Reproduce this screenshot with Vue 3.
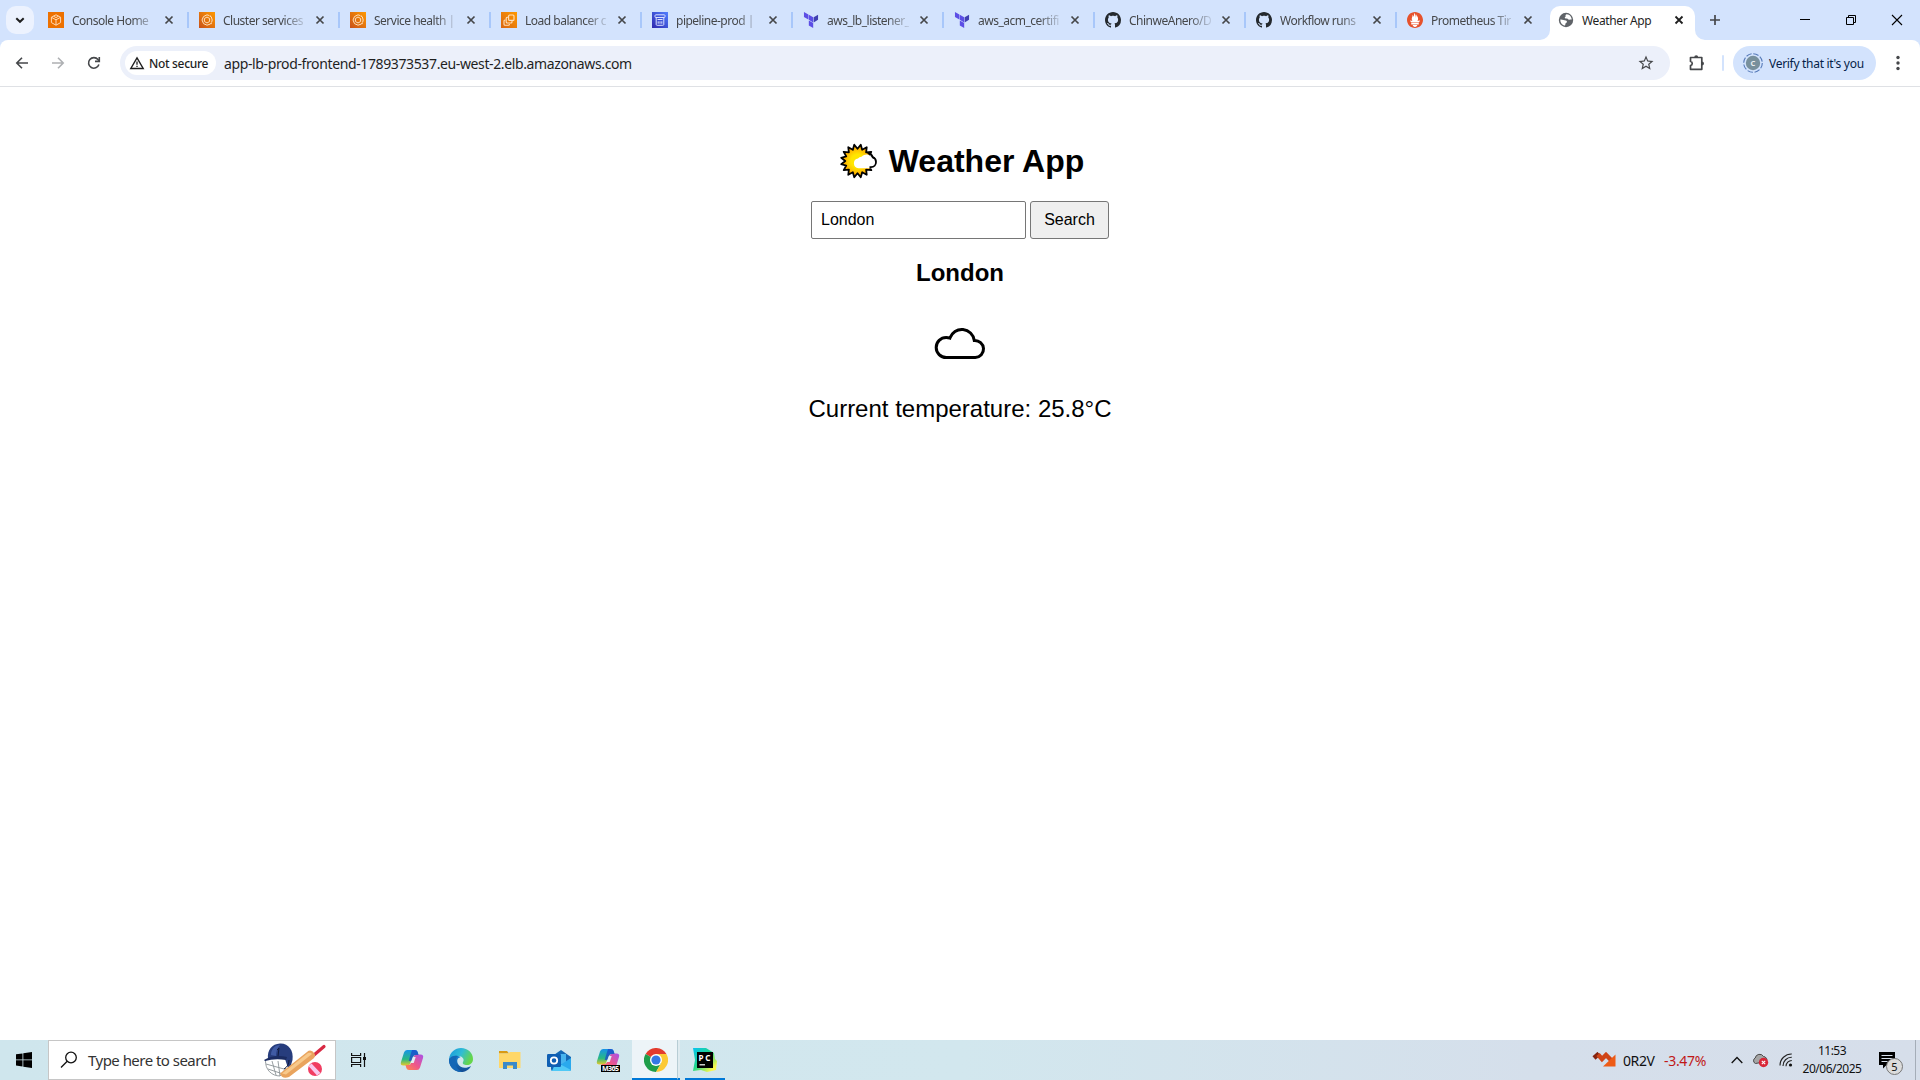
<script setup>
const tabs = [
  { title: 'Console Home', icon: 'cube' },
  { title: 'Cluster services', icon: 'ecs' },
  { title: 'Service health |', icon: 'ecs' },
  { title: 'Load balancer c', icon: 'ec2' },
  { title: 'pipeline-prod |', icon: 's3' },
  { title: 'aws_lb_listener_', icon: 'terraform' },
  { title: 'aws_acm_certifi', icon: 'terraform' },
  { title: 'ChinweAnero/D', icon: 'github' },
  { title: 'Workflow runs', icon: 'github' },
  { title: 'Prometheus Tir', icon: 'prometheus' },
]

// Star outline of the sun: alternating outer and inner points
const spikes = 16
const sunPoints = Array.from({ length: spikes * 2 }, (_, k) => {
  const r = k % 2 ? 16.6 : 12.2
  const a = (k * Math.PI) / spikes
  return `${(17.5 + r * Math.cos(a)).toFixed(2)},${(18 + r * Math.sin(a)).toFixed(2)}`
}).join(' ')
</script>

<template>
  <div class="screen">
    <header class="tabstrip">
      <button class="tab-search"><svg width="28" height="28" viewBox="0 0 28 28"><path d="M10.3 12.2l3.7 3.6 3.7-3.6" fill="none" stroke="#1f1f1f" stroke-width="2" /></svg></button>
      <div v-for="(t, i) in tabs" :key="i" class="tab" :class="{ last: i === tabs.length - 1 }">
        <svg v-if="t.icon === 'cube'" class="fav" viewBox="0 0 16 16">
          <rect width="16" height="16" fill="#ed7100" />
          <path d="M8 2.8l4.6 2.5v5.3L8 13.2l-4.6-2.6V5.3zM3.4 5.3L8 7.8l4.6-2.5M8 7.8v5.4M5.6 4.2L8 5.6l2.4-1.4" fill="none" stroke="#ffd9b5" stroke-width="1" stroke-linejoin="round" />
        </svg>
        <svg v-else-if="t.icon === 'ecs'" class="fav" viewBox="0 0 16 16">
          <defs><linearGradient :id="'ecs' + i" x1="0" y1="1" x2="1" y2="0"><stop offset="0" stop-color="#c8511b" /><stop offset="1" stop-color="#ff9900" /></linearGradient></defs>
          <rect width="16" height="16" :fill="'url(#ecs' + i + ')'" />
          <path d="M10.4 3.6L8 2.8 4.5 4.6 3 8l1.5 3.6L8 13.2l3.4-1.2M12.6 10.6L13.2 8l-.9-3.2" fill="none" stroke="#ffe0bd" stroke-width="1" />
          <path d="M8 5l2.6 1.5v3L8 11 5.4 9.500v-3z" fill="none" stroke="#ffe0bd" stroke-width="1" />
          <circle cx="11.500" cy="4.200" r=".8" fill="#ffe0bd" /><circle cx="12" cy="11.500" r=".8" fill="#ffe0bd" />
        </svg>
        <svg v-else-if="t.icon === 'ec2'" class="fav" viewBox="0 0 16 16">
          <defs><linearGradient id="ec2" x1="0" y1="1" x2="1" y2="0"><stop offset="0" stop-color="#d86613" /><stop offset="1" stop-color="#ff9900" /></linearGradient></defs>
          <rect width="16" height="16" fill="url(#ec2)" />
          <g fill="none" stroke="#ffe0bd" stroke-width="1.100"><rect x="7.600" y="3" width="5.400" height="5.400" rx="1" /><path d="M7 5.300H6.200a1 1 0 00-1 1V10a1 1 0 001 1H10a1 1 0 001-1V9" /><path d="M4.500 8H4a1 1 0 00-1 1v3.200a1 1 0 001 1h3.400a1 1 0 001-1V12" /></g>
        </svg>
        <svg v-else-if="t.icon === 's3'" class="fav" viewBox="0 0 16 16">
          <defs><linearGradient id="s3" x1="0" y1="1" x2="1" y2="0"><stop offset="0" stop-color="#2e27ad" /><stop offset="1" stop-color="#527fff" /></linearGradient></defs>
          <rect width="16" height="16" fill="url(#s3)" />
          <g fill="none" stroke="#dbe0ff" stroke-width="1"><rect x="3" y="2.800" width="10" height="2.700" rx=".8" /><path d="M4.200 5.500v7q0 .8 1 .8h5.600q1 0 1-.8v-7M5.500 7.500h5" /><path d="M6.200 9.300v2.400M8 9.300v2.400M9.800 9.300v2.400" /></g>
        </svg>
        <svg v-else-if="t.icon === 'terraform'" class="fav" viewBox="0 0 24 24">
          <path fill="#5c4ee5" d="M1.440 0v7.575l6.561 3.790V3.787zM8.720 4.230v7.575l6.561 3.787V8.018zm0 8.405v7.575L15.280 24v-7.578z" /><path fill="#4040b2" d="M22.560 4.227l-6.561 3.791v7.574l6.560-3.787z" />
        </svg>
        <svg v-else-if="t.icon === 'github'" class="fav" viewBox="0 0 16 16">
          <path fill="#24292e" d="M8 0C3.580 0 0 3.580 0 8c0 3.540 2.290 6.530 5.470 7.590.4.070.55-.17.55-.38 0-.19-.01-.82-.01-1.490-2.010.37-2.530-.49-2.690-.94-.09-.23-.48-.94-.82-1.130-.28-.15-.68-.52-.01-.53.63-.01 1.080.58 1.230.82.72 1.210 1.870.87 2.330.66.07-.52.28-.87.51-1.070-1.780-.2-3.640-.89-3.640-3.950 0-.87.31-1.590.82-2.150-.08-.2-.36-1.020.08-2.120 0 0 .67-.21 2.200.82.64-.18 1.320-.27 2-.27s1.360.09 2 .27c1.530-1.040 2.200-.82 2.200-.82.44 1.100.16 1.920.08 2.120.51.56.82 1.270.82 2.150 0 3.070-1.870 3.750-3.650 3.950.29.25.54.73.54 1.480 0 1.070-.01 1.930-.01 2.200 0 .21.15.46.55.38A8.013 8.013 0 0016 8c0-4.420-3.580-8-8-8z" />
        </svg>
        <svg v-else class="fav" viewBox="0 0 24 24">
          <circle cx="12" cy="12" r="11" fill="#fff" />
          <path fill="#e6522c" d="M12 0C5.373 0 0 5.372 0 12c0 6.627 5.373 12 12 12s12-5.373 12-12c0-6.628-5.373-12-12-12zm0 22.460c-1.885 0-3.414-1.260-3.414-2.814h6.828c0 1.553-1.528 2.813-3.414 2.813zm5.640-3.745H6.360v-2.046h11.280v2.046zm-.04-3.098H6.391c-.037-.043-.075-.086-.111-.13-1.155-1.401-1.427-2.133-1.690-2.879-.005-.025 1.400.287 2.395.511 0 0 .513.119 1.262.255-.72-.843-1.147-1.915-1.147-3.010 0-2.406 1.845-4.508 1.180-6.207.648.053 1.340 1.367 1.387 3.422.689-.951.977-2.690.977-3.755 0-1.103.727-2.385 1.454-2.429-.648 1.069.168 1.984.894 4.256.272.854.237 2.290.447 3.201.07-1.892.395-4.652 1.595-5.605-.529 1.200.079 2.702.494 3.424.671 1.164 1.078 2.047 1.078 3.716a4.642 4.642 0 01-1.110 2.996c.792-.149 1.340-.283 1.340-.283l2.573-.502s-.374 1.538-1.810 3.019z" />
        </svg>
        <span class="title">{{ t.title }}</span>
        <svg class="close" viewBox="0 0 16 16"><path d="M4.500 4.500l7 7M11.500 4.500l-7 7" stroke="#45474a" stroke-width="1.700" /></svg>
      </div>
      <div class="tab active">
        <svg class="foot left" width="10" height="10"><path d="M10 0v10H0A10 10 0 0010 0z" fill="#fff" /></svg>
        <svg class="fav" viewBox="0 0 16 16"><circle cx="8" cy="8" r="7.200" fill="#5f6368" /><path d="M2.300 7.600c2.500-.2 3.500.8 5.500.9.900.1 1.200.8 1.100 1.500-.1 1-1.500 1-1.500 1.900 0 .8-.4 1.900-1.300 1.700C3.600 12.700 2.200 10.500 2.300 7.600zM8.800 2.300c-1.100.3-1.500 1.100-1.200 1.900.2.700-1 .7-.8 1.500.2.900 1.400.6 2.200.8 1 .2 1 1.300 2.100 1.300.9 0 1.500-.2 2.600-.2C13.600 5 11.800 2.500 8.800 2.300z" fill="#fff" /></svg>
        <span class="title">Weather App</span>
        <svg class="close" viewBox="0 0 16 16"><path d="M4.500 4.500l7 7M11.500 4.500l-7 7" stroke="#1f1f1f" stroke-width="1.800" /></svg>
        <svg class="foot right" width="10" height="10"><path d="M0 0v10h10A10 10 0 010 0z" fill="#fff" /></svg>
      </div>
      <svg class="plus" width="28" height="28" viewBox="0 0 28 28"><path d="M14 9v10M9 14h10" stroke="#45474a" stroke-width="1.700" /></svg>
      <div class="window-controls">
        <svg width="46" height="40"><path d="M18 19.500h10" stroke="#000" /></svg>
        <svg width="46" height="40"><path d="M18.500 17.500h7v7h-7zM20.500 17v-1.500h7v7H26" fill="none" stroke="#000" /></svg>
        <svg width="46" height="40"><path d="M18 15l10 10M28 15L18 25" stroke="#000" stroke-width="1.100" /></svg>
      </div>
    </header>

    <div class="toolbar-wrap">
      <div class="toolbar">
        <svg class="nav" viewBox="0 0 16 16"><path d="M14 8H3M8 2.800L2.800 8 8 13.200" fill="none" stroke="#45474a" stroke-width="1.600" /></svg>
        <svg class="nav" viewBox="0 0 16 16"><path d="M2 8h11M8 2.800L13.200 8 8 13.200" fill="none" stroke="#aeb0b3" stroke-width="1.600" /></svg>
        <svg class="nav" viewBox="0 0 16 16"><path d="M12.900 9.600A5.300 5.300 0 1112 4.600l1.300 1.500" fill="none" stroke="#45474a" stroke-width="1.600" /><path d="M13.300 2v4.400H9" fill="none" stroke="#45474a" stroke-width="1.600" /></svg>
        <div class="omnibox">
          <div class="chip">
            <svg width="16" height="14" viewBox="0 0 16 14"><path d="M8 1.800l6.200 10.700H1.800z" fill="none" stroke="#1f1f1f" stroke-width="1.400" /><path d="M8 5.500v3.300M8 9.800v1.300" stroke="#1f1f1f" stroke-width="1.300" /></svg>
            <span class="chip-text">Not secure</span>
          </div>
          <span class="url">app-lb-prod-frontend-1789373537.eu-west-2.elb.amazonaws.com</span>
          <svg class="star" width="18" height="18" viewBox="0 0 24 24"><path fill="#45474a" d="M22 9.240l-7.190-.62L12 2 9.190 8.630 2 9.240l5.460 4.730L5.820 21 12 17.270 18.180 21l-1.630-7.030L22 9.240zM12 15.400l-3.760 2.270 1-4.280-3.320-2.880 4.380-.38L12 6.100l1.710 4.040 4.380.38-3.320 2.880 1 4.280L12 15.400z" /></svg>
        </div>
        <svg class="ext" width="20" height="20" viewBox="0 0 20 20"><path d="M3.500 4.500h11.300v11.800H3.500v-3.800c2.300-.3 2.300-3.700 0-4z" fill="none" stroke="#45474a" stroke-width="1.700" stroke-linejoin="round" /><path d="M7.200 4.500a2 2.200 0 014 0zM14.800 8.400a2.200 2 0 010 4z" fill="#45474a" /></svg>
        <i class="divider"></i>
        <div class="verify">
          <svg width="20" height="20" viewBox="0 0 20 20"><circle cx="10" cy="10" r="9.300" fill="none" stroke="#5579b8" stroke-width="1.100" stroke-dasharray="5.600 1.700" /><circle cx="10" cy="10" r="7.200" fill="#78909c" /><text x="10" y="12.700" text-anchor="middle" font-size="7.500" font-weight="700" fill="#e8eef0">C</text></svg>
          <span class="verify-text">Verify that it's you</span>
        </div>
        <svg class="more" width="6" height="18" viewBox="0 0 6 18"><g fill="#45474a"><circle cx="3" cy="3.500" r="1.700" /><circle cx="3" cy="9" r="1.700" /><circle cx="3" cy="14.500" r="1.700" /></g></svg>
      </div>
    </div>

    <main class="page">
      <h1>
        <svg width="37" height="36" viewBox="0 0 37 36">
          <defs><radialGradient id="sun"><stop offset=".4" stop-color="#ffe600" /><stop offset=".9" stop-color="#ffa500" /></radialGradient></defs>
          <polygon :points="sunPoints" fill="url(#sun)" stroke="#000" stroke-width="1.800" stroke-linejoin="round" />
          <path d="M18.500 25.300a5 5 0 01-.5-9.900 4.500 4.500 0 013.500-1.600 6.500 6.500 0 0110.800 1.400 5 5 0 01-.8 10.100z" fill="#fff" />
          <path d="M27.500 10c2.700.4 4.500 1.800 5.300 4.200 1.900.8 3.200 2.600 3.200 4.800 0 2.900-2 5.200-5 5.200h-1.500" fill="none" stroke="#000" stroke-width="1.800" />
        </svg>
        <span>Weather App</span>
      </h1>
      <div class="search-row">
        <input value="London" />
        <button>Search</button>
      </div>
      <h2>London</h2>
      <svg class="cloud" width="52" height="32" viewBox="0 0 52 32"><path d="M12.200 30.500a10 10 0 010-20q1.900 0 3.700.6A12.600 12.800 0 0140.300 13.500 8.700 8.500 0 0141.300 30.500z" fill="#fff" stroke="#000" stroke-width="3" /></svg>
      <p class="temp">Current temperature: 25.8°C</p>
    </main>

    <footer class="taskbar">
      <div class="start"><svg width="16" height="16" viewBox="0 0 16 16"><path d="M0 2.300l6.500-.9v6.100H0zM7.300 1.300L16 0v7.500H7.300zM0 8.300h6.500v6.200L0 13.600zM7.300 8.300H16V16l-8.700-1.300z" /></svg></div>
      <div class="search">
        <svg class="lens" width="18" height="18" viewBox="0 0 18 18"><circle cx="11" cy="6.500" r="5.300" fill="none" stroke="#111" stroke-width="1.300" /><path d="M7.200 10.300L1 16.500" stroke="#111" stroke-width="1.300" /></svg>
        <span class="hint">Type here to search</span>
        <svg class="cricket" width="64" height="37" viewBox="0 0 64 37">
          <g fill="none" stroke="#8d9497" stroke-width=".9"><path d="M2.500 18C2 28 9 34 17 34l6-8M3 22l18 5M5 27l15 5M9 19l4 14M15 19l2 15" /></g>
          <path d="M5 17C4 8 9 2 17 1.500 25 1 31 8 29.500 18l-2.500 8-2 0-3-9H8z" fill="#273d7d" /><path d="M8 13C8 7 12 3 17 3c-3 3-4 7-4 11z" fill="#405ba4" /><path d="M1 18q10-6 23-3l-1 3q-11-2-21 1z" fill="#1b2c62" /><path d="M14 8l2-2-1 8M26 18q0 6-5 9" stroke="#101a3d" fill="none" />
          <path d="M51 13l10-8.500" stroke="#d82943" stroke-width="3.200" stroke-linecap="round" /><path d="M17 31.500L44 10q4-3.500 7.500 1.500 1.500 2.500-1 5L26 35q-7 2.500-9-3.500z" fill="#e9a45e" /><path d="M19 31.500L45 11q2.500-1 4 1L23 32.500z" fill="#f8c98b" />
          <circle cx="52" cy="27" r="7" fill="#f13d62" /><path d="M45.500 24l8.500 9.500 3.500-2.500-9-9.500z" fill="#f9c8ee" />
        </svg>
      </div>
      <div class="task view"><svg width="18" height="18" viewBox="0 0 18 18"><g fill="none" stroke="#111" stroke-width="1.200"><path d="M1.600 2v2.500h9V2M1.600 16v-2.500h9V16M1.600 6.500h9v5h-9zM14.500 2v14" /></g><path d="M13 6h3v3h-3z" fill="#111" /></svg></div>
      <div class="task">
        <svg width="24" height="22" viewBox="0 0 24 22">
          <defs>
            <linearGradient id="cpa" x1="0" y1="0" x2="0" y2="1"><stop offset="0" stop-color="#1693e9" /><stop offset=".6" stop-color="#29b981" /><stop offset="1" stop-color="#e7c92b" /></linearGradient>
            <linearGradient id="cpb" x1="1" y1="0" x2="0" y2="1"><stop offset="0" stop-color="#a951e9" /><stop offset=".55" stop-color="#ef5789" /><stop offset="1" stop-color="#ff8a4c" /></linearGradient>
          </defs>
          <path d="M7 1h8q2 0 2.700 2l.8 3h-3q-2 0-2.600 2L10.500 14q-.8 2.500-3.500 2.500H3.500Q0 16.500 1 13L4 3.500Q4.800 1 7 1z" fill="url(#cpa)" />
          <path d="M17 21H9q-2 0-2.700-2l-.8-3h3q2 0 2.600-2L13.500 8q.8-2.500 3.500-2.500h3.500Q24 5.500 23 9l-3 9.500Q19.200 21 17 21z" fill="url(#cpb)" />
          <path d="M12 1h3q2 0 2.700 2l.8 3h-3q-2 0-2.600 2l-1.200 4h-3l1.700-6z" fill="#1b48c9" fill-opacity=".75" />
          <path d="M12.900 8l-2.400 6h3.200l2-6z" fill="#e4f0f4" />
        </svg>
      </div>
      <div class="task">
        <svg width="24" height="24" viewBox="0 0 24 24">
          <defs>
            <linearGradient id="eda" x1="0" y1="0" x2="1" y2=".4"><stop offset="0" stop-color="#1796dd" /><stop offset=".55" stop-color="#30bcd5" /><stop offset="1" stop-color="#65d64b" /></linearGradient>
            <linearGradient id="edb" x1="0" y1="0" x2="0" y2="1"><stop offset="0" stop-color="#1682d5" /><stop offset="1" stop-color="#134b91" /></linearGradient>
          </defs>
          <path d="M0 11C1 4 6 0 12 0c7 0 12 5 12 11 0 4-3 6-6 6-3 0-5-1-4-3 2-3-1-6-5-6-4 0-7 1-9 3z" fill="url(#eda)" />
          <path d="M0 11c2-3 6-4 9-3 1 .3 2 .8 2.500 1.300C8 10 7.500 13 9 16c2 4 8 5 13 2-2 4-6 6-10 6C5 24-.5 18 0 11z" fill="url(#edb)" />
          <path d="M9 8c-4 3-4 12 4 15.900C5 24.500-.5 18 0 11c2-3 6-4 9-3z" fill="#1467b6" />
        </svg>
      </div>
      <div class="task">
        <svg width="22" height="20" viewBox="0 0 22 20"><path d="M0 1h8l2 2.500H0z" fill="#d99a13" /><path d="M0 3.500h9L11 2h10.500v16H0z" fill="#ffd769" /><path d="M4 19v-7h14v7h-4v-3.500H8V19z" fill="#3b8ac9" /></svg>
      </div>
      <div class="task">
        <svg width="24" height="23" viewBox="0 0 24 23"><path d="M4 8L14 1l10 7v12q0 2-2 2H6q-2 0-2-2z" fill="#1468b5" /><path d="M6 5h13v10H6z" fill="#48b4ee" /><path d="M4 22L24 9v11q0 2-2 2z" fill="#2aa9ed" /><path d="M9 13l15 8q-.5 1-2 1H5z" fill="#50c9f6" /><rect y="5" width="14" height="13" rx="1.200" fill="#0f5fb3" /><circle cx="7" cy="11.500" r="3.200" fill="none" stroke="#fff" stroke-width="1.800" /></svg>
      </div>
      <div class="task">
        <svg width="24" height="24" viewBox="0 0 24 24">
          <path d="M7 1h8q2 0 2.700 2l.8 3h-3q-2 0-2.600 2L10.500 14q-.8 2.500-3.500 2.500H3.500Q0 16.500 1 13L4 3.500Q4.800 1 7 1z" fill="url(#cpa)" />
          <path d="M17 21H9q-2 0-2.700-2l-.8-3h3q2 0 2.600-2L13.500 8q.8-2.500 3.500-2.500h3.500Q24 5.500 23 9l-3 9.500Q19.200 21 17 21z" fill="url(#cpb)" />
          <path d="M12 1h3q2 0 2.700 2l.8 3h-3q-2 0-2.600 2l-1.200 4h-3l1.700-6z" fill="#1b48c9" fill-opacity=".75" />
          <path d="M12.900 8l-2.400 6h3.200l2-6z" fill="#e4f0f4" />
          <rect x="5" y="17" width="19" height="7" fill="#000" /><text x="14.500" y="23" text-anchor="middle" font-size="7" font-weight="700" textLength="17" fill="#fff">M365</text>
        </svg>
      </div>
      <div class="task current">
        <svg width="24" height="24" viewBox="0 0 24 24"><path d="M12 12L1.600 6A12 12 0 0122.400 6z" fill="#e33b2e" /><path d="M12 12L1.600 6A12 12 0 0012 24l5.200-9z" fill="#1e9e4a" /><path d="M12 6h10.400A12 12 0 0112 24l5.200-9z" fill="#fcc934" /><circle cx="12" cy="12" r="6" fill="#fff" /><circle cx="12" cy="12" r="4.600" fill="#3478e5" /></svg>
      </div>
      <i class="stack"></i>
      <div class="task running">
        <svg width="24" height="24" viewBox="0 0 24 24"><defs><linearGradient id="pc" x1="0" y1="0" x2="1" y2="1"><stop offset="0" stop-color="#07c3f2" /><stop offset=".45" stop-color="#21d789" /><stop offset=".85" stop-color="#fcf84a" /></linearGradient></defs><path d="M0 0h13l8 5 1 6 2 2-1 9-9 2-6-2-8 1 2-11z" fill="url(#pc)" /><rect x="4" y="4" width="16" height="16" fill="#000" /><text x="5.500" y="12.500" font-size="8" font-weight="700" textLength="12" fill="#fff">PC</text><path d="M6.500 16.800h5.500" stroke="#fff" stroke-width="1.200" /></svg>
      </div>
      <div class="tray">
        <svg class="stock" width="24" height="16" viewBox="0 0 24 16"><path d="M2 6l5-4.500" stroke="#84230f" stroke-width="4.500" /><path d="M6 2.500l4 4.500 4-4 6 6" fill="none" stroke="#cf4417" stroke-width="4.500" /><path d="M23.500 2.500V14.500H11z" fill="#ee5b16" /></svg>
        <span class="ticker">0R2V</span>
        <span class="change">-3.47%</span>
        <svg class="chev" width="12" height="8" viewBox="0 0 12 8"><path d="M.700 7L6 1.500 11.300 7" fill="none" stroke="#111" stroke-width="1.300" /></svg>
        <svg class="onedrive" width="17" height="15" viewBox="0 0 17 15"><path d="M3.500 10.500a3 3 0 01-.3-5.500A4.500 4.500 0 0111.500 3.500a3.500 3.500 0 013 5z" fill="#a5a5a5" stroke="#484848" stroke-width="1" /><circle cx="11.500" cy="9.500" r="4.700" fill="#d92637" /><path d="M9.800 7.800l3.400 3.400M13.200 7.800l-3.400 3.400" stroke="#fff" stroke-width="1.100" /></svg>
        <svg class="wifi" width="14" height="14" viewBox="0 0 14 14"><g fill="none" stroke="#222" stroke-width="1.100"><path d="M1 12.500A11.500 11.500 0 0112.800 1" /><path d="M4 13A8.500 8.500 0 0112.800 4.300" /><path d="M7 13.200A5.800 5.800 0 0112.800 7.500" /></g><circle cx="11.500" cy="12" r="1.600" fill="#111" /></svg>
        <div class="clock"><span class="time">11:53</span><span class="date">20/06/2025</span></div>
        <div class="notes">
          <svg width="17" height="17" viewBox="0 0 17 17"><path d="M0 0h16v13H7.500L4 16.500V13H0z" fill="#000" /><path d="M2.500 3.500h11M2.500 6.500h11M2.500 9.500h6" stroke="#d6dfeb" stroke-width="1.100" /></svg>
          <b class="badge">5</b>
        </div>
        <i class="peek"></i>
      </div>
    </footer>
  </div>
</template>

<style>
body { margin: 0; overflow: hidden; }
</style>

<style scoped>
.screen { width: 1920px; height: 1080px; display: flex; flex-direction: column; background: #fff; font-family: "Noto Sans", "Open Sans", sans-serif; box-sizing: border-box; overflow: hidden; white-space: nowrap; }
.screen * { box-sizing: border-box; }
svg { display: block; flex: none; }
.tabstrip { height: 40px; flex: none; background: #d3e3fd; display: flex; }
.tab-search { width: 28px; height: 28px; margin: 6px 4px 0 6px; padding: 0; border: 0; border-radius: 10px; background: #ecf2fe; flex: none; }
.tab { width: 151px; height: 40px; flex: none; display: flex; align-items: center; padding-left: 10px; position: relative; background: linear-gradient(#a8c7fa, #a8c7fa) 149px 12px / 2px 16px no-repeat; }
.tab.last { background: none; }
.fav { width: 16px; height: 16px; }
.title { width: 82px; margin-left: 8px; font-size: 12px; line-height: 16px; letter-spacing: -.5px; color: #45474a; padding-top: 1px; -webkit-mask-image: linear-gradient(90deg, #000 60px, rgba(0, 0, 0, .15) 82px); mask-image: linear-gradient(90deg, #000 60px, rgba(0, 0, 0, .15) 82px); }
.close { width: 16px; height: 16px; margin-left: 7px; }
.tab.active { width: 145px; height: 34px; margin: 6px 0 0 2px; padding: 0 0 6px 8px; background: #fff; border-radius: 10px 10px 0 0; }
.active .title { color: #1f1f1f; letter-spacing: -.38px; -webkit-mask-image: none; mask-image: none; }
.foot { position: absolute; bottom: 0; }
.foot.left { left: -10px; }
.foot.right { right: -10px; }
.plus { margin: 6px 0 0 6px; }
.window-controls { display: flex; margin-left: auto; }
.toolbar-wrap { height: 47px; flex: none; background: #d3e3fd; }
.toolbar { height: 47px; background: #fff; border-bottom: 1px solid #dfe1e5; border-radius: 8px 8px 0 0; display: flex; align-items: center; padding-left: 14px; }
.nav { width: 16px; height: 16px; margin-right: 20px; }
.nav + .omnibox { margin-left: -2px; }
.omnibox { width: 1550px; height: 34px; border-radius: 17px; background: #ecf0fa; display: flex; align-items: center; padding: 0 15px 0 5px; }
.chip { width: 91px; height: 24px; border-radius: 12px; background: #fff; display: flex; align-items: center; padding-left: 4px; }
.chip-text { margin-left: 4px; font-size: 12px; font-weight: 500; letter-spacing: -.32px; color: #1f1f1f; }
.url { margin-left: 8px; font-size: 14px; letter-spacing: -.375px; color: #1f1f1f; }
.star { margin-left: auto; }
.ext { margin-left: 17px; }
.divider { width: 2px; height: 16px; margin-left: 15px; background: #d3e3fd; border-radius: 1px; }
.verify { width: 143px; height: 34px; margin-left: 9px; border-radius: 17px; background: #d3e3fd; display: flex; align-items: center; padding-left: 10px; }
.verify-text { margin-left: 6px; font-size: 12px; letter-spacing: -.3px; color: #041e49; }
.more { margin-left: 19px; }
.page { height: 953px; flex: none; display: flex; flex-direction: column; align-items: center; padding-top: 54px; font-family: "Liberation Sans", Arial, sans-serif; color: #000; }
h1 { margin: 0; height: 40px; padding-left: 4px; font-size: 32px; line-height: 40px; display: flex; align-items: center; gap: 12px; }
.search-row { display: flex; gap: 4px; margin-top: 20px; height: 38px; }
input { width: 215px; height: 38px; padding: 0 9px; border: 1px solid #767676; border-radius: 2px; background: #fff; font: 16px "Liberation Sans", Arial, sans-serif; color: #000; outline: 0; }
.search-row button { width: 79px; height: 38px; padding: 0; border: 1px solid #767676; border-radius: 3px; background: #efefef; font: 16px "Liberation Sans", Arial, sans-serif; color: #000; }
h2 { margin: 20px 0 0; font-size: 24px; line-height: 28px; }
.cloud { margin-top: 40px; }
.temp { margin: 36px 0 0; font-size: 24px; line-height: 28px; }
.taskbar { height: 40px; flex: none; display: flex; background: linear-gradient(90deg, #cfe6ed, #d2e7ee 50%, #d5dfeb 80%, #d6deea); }
.start { width: 48px; display: flex; align-items: center; justify-content: center; }
.search { width: 288px; height: 40px; background: #fff; border: 1px solid #c6c6c6; display: flex; align-items: center; padding-left: 11px; }
.hint { width: 130px; margin-left: 10px; font-size: 15px; letter-spacing: -.53px; color: #333; }
.cricket { margin-left: 45px; }
.task { width: 49px; display: flex; align-items: center; justify-content: center; }
.task.view { width: 46px; margin-right: 5px; }
.task.current { width: 45px; margin-left: 0; padding-left: 3px; background: #edf4f8; border-bottom: 2px solid #0078d7; }
.task.current svg, .task.running svg { margin-top: 2px; }
.stack { width: 3px; height: 40px; border-left: 1px solid #b8cdd5; background: #dfebf0; border-bottom: 2px solid #0078d7; }
.task.running { width: 40px; margin-left: 5px; border-bottom: 2px solid #0078d7; }
.tray { margin-left: auto; width: 328px; display: flex; align-items: center; }
.ticker { width: 34px; margin-left: 7px; font-size: 14px; letter-spacing: -.4px; color: #111; }
.change { width: 44px; margin-left: 7px; font-size: 14px; letter-spacing: -.3px; color: #c01818; }
.chev { margin-left: 23px; }
.onedrive { margin-left: 9px; }
.wifi { margin-left: 10px; }
.clock { width: 60px; margin-left: 9px; display: flex; flex-direction: column; align-items: center; font-size: 12px; line-height: 18px; color: #111; letter-spacing: -.5px; }
.notes { position: relative; margin-left: 17px; }
.badge { position: absolute; left: 7px; top: 6px; width: 17px; height: 17px; border: 1px solid #777; border-radius: 50%; background: #dcdcdc; font-size: 11px; font-weight: 400; line-height: 15px; text-align: center; color: #111; }
.peek { width: 1px; height: 40px; margin-left: auto; margin-right: 4px; background: #a5adb8; }
</style>
